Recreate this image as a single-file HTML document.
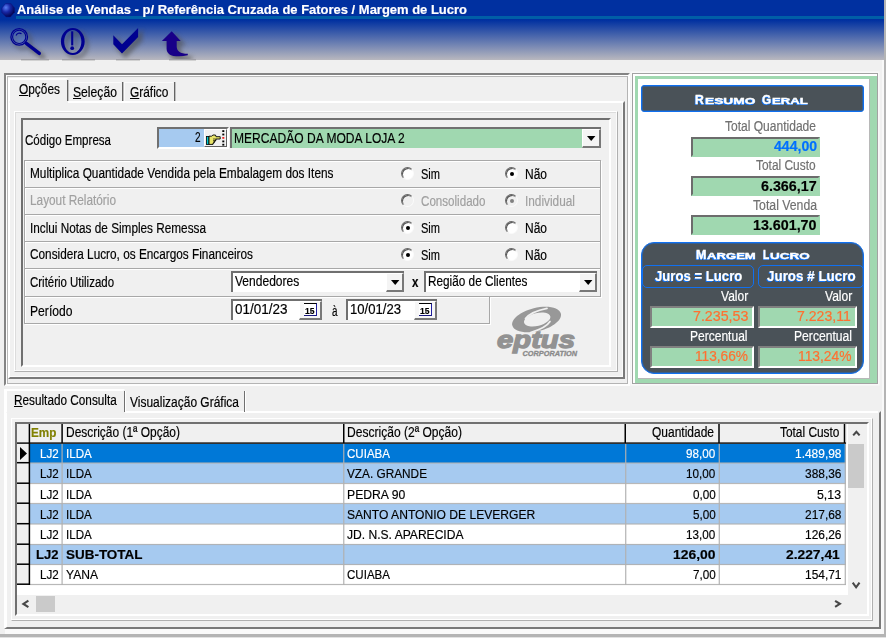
<!DOCTYPE html>
<html lang="pt-BR"><head><meta charset="utf-8"><title>Análise de Vendas</title>
<style>
html,body{margin:0;padding:0;}
body{width:886px;height:638px;overflow:hidden;background:#f0f0f0;position:relative;font-family:"Liberation Sans",sans-serif;}
body div,body svg{position:absolute;box-sizing:border-box;}
.t{position:absolute;white-space:pre;line-height:0;height:0;transform-origin:0 0;-webkit-text-stroke:0.18px currentColor;}
.t u{text-decoration:underline;text-underline-offset:1px;}
.low{border:2px solid;border-color:#707070 #fff #fff #707070;}
.row{border:1px solid #a8a8a8;box-shadow:inset 1px 1px 0 #fff, 1px 1px 0 #fff;}
.btn{background:#f0f0f0;border:1px solid;border-color:#fff #606060 #606060 #fff;box-shadow:inset -1px -1px 0 #a0a0a0;}
.rad{border-radius:50%;width:13px;height:13px;background:#fff;border:1px solid;border-color:#686868 #fafafa #fafafa #686868;box-shadow:inset 1px 1px 0 #585858;transform:rotate(0deg);}
.rad.on::after{content:"";position:absolute;left:3.500px;top:3.500px;width:4px;height:4px;border-radius:50%;background:#000;}
.rad.dis{background:#f0f0f0;}
.rad.dis.on::after{background:#808080;}
.gf{background:#a0d8b0;border:2px solid;border-color:#6c6c6c #a0d8b0 #a0d8b0 #6c6c6c;}
.gf2{background:#a0d8b0;border:2px solid;border-color:#808080 #fff #fff #808080;}

</style></head>
<body>
<div style="left:0px;top:0px;width:886px;height:59.5px;background:linear-gradient(to bottom,#0030a0 0,#0030a0 20px,#b6b6be 59.500px);"></div>
<div style="left:16px;top:16px;width:870px;height:3px;background:#005ea6;"></div>
<div style="left:884px;top:0px;width:2px;height:638px;background:#b4b4b4;"></div>
<svg style="left:0;top:2px" width="17" height="17" viewBox="0 2 17 17"><defs><radialGradient id="sg" cx="0.32" cy="0.3" r="0.75"><stop offset="0" stop-color="#5880f4"/><stop offset="0.45" stop-color="#1828a8"/><stop offset="1" stop-color="#000048"/></radialGradient></defs><path d="M5.500 3.600h5.500l3.700 4.400v4.200l-4.200 4.700h-4.500l-4.200-4.400v-4.500z" fill="url(#sg)" stroke="#0a1888" stroke-width="0.600" stroke-linejoin="round"/></svg>
<svg style="left:0;top:20px" width="220" height="42" viewBox="0 20 220 42">
<defs><filter id="sh" x="-30%" y="-30%" width="170%" height="170%"><feGaussianBlur stdDeviation="2.2"/></filter>
<clipPath id="tb"><rect x="0" y="20" width="220" height="39"/></clipPath></defs>
<g clip-path="url(#tb)"><g filter="url(#sh)" opacity="0.6" transform="translate(3.5,3.5)" fill="#505050" stroke="#505050">
<circle cx="19.2" cy="36.900" r="8" stroke-width="3" fill="none"/><path d="M26 43.500L39.500 53.600" stroke-width="5" stroke-linecap="round"/>
<ellipse cx="72.800" cy="41.400" rx="10.500" ry="12.200" stroke-width="3.500" fill="none"/><path d="M72.200 31.300V49" stroke-width="2.500"/>
<path d="M113.300 35.200L122 44.300L138.100 28.100V36.900L122 53.600L113.300 44.300z" stroke-width="2"/>
<path d="M171.700 31.300L180.700 40.900H176.700V46.500C176.700 51 180 53.800 187.800 53.800V55.200C183 56.400 178 56.400 173.400 55.900C169 55 166.600 52.500 166.600 48.500V40.900H161.900z" stroke-width="2"/>
</g></g>
<rect x="21" y="59" width="28" height="2" fill="#000" opacity="0.13"/>
<rect x="62" y="59" width="33" height="2" fill="#000" opacity="0.13"/>
<rect x="116" y="59" width="24" height="2" fill="#000" opacity="0.13"/>
<rect x="169" y="59" width="27" height="2" fill="#000" opacity="0.13"/>
<circle cx="19.2" cy="36.900" r="7.500" fill="#5878c8" opacity="0.35"/>
<g fill="none" stroke="#000090">
<circle cx="19.2" cy="36.900" r="8.300" stroke-width="1.300"/>
<circle cx="19.2" cy="36.900" r="6.600" stroke-width="1.100"/>
<path d="M16 35.500a3.800 3.800 0 0 1 5.500-1.800" stroke-width="1.100"/>
<path d="M26.300 43.300L39.300 53.400" stroke-width="3.400" stroke-linecap="round"/>
<path d="M72.200 31.300V45.400" stroke-width="2.100"/>
</g>
<path d="M72.800 27.900c6.600 0 11.900 6 11.900 13.500s-5.300 13.600-11.900 13.600s-11.900-6.100-11.900-13.600s5.300-13.500 11.900-13.500zM72.800 29.900c-4.800 0-8.600 5.100-8.600 11.500s3.800 11.600 8.600 11.600s8.600-5.200 8.600-11.600s-3.800-11.500-8.600-11.500z" fill="#000090" fill-rule="evenodd"/>
<circle cx="72.200" cy="48.200" r="1.900" fill="#000090"/>
<path d="M113.300 35.200L122 44.300L138.100 28.100V36.900L122 53.600L113.300 44.300z" fill="#000090"/>
<path d="M171.700 31.300L180.700 40.900H176.700V46.500C176.700 51 180 53.800 187.800 53.800V55.200C183 56.400 178 56.400 173.400 55.900C169 55 166.600 52.500 166.600 48.500V40.900H161.900z" fill="#180088"/>
</svg>

<div style="left:4px;top:73px;width:626px;height:313px;border:2px solid;border-color:#848484 #fdfdfd #fdfdfd #848484;box-shadow:inset 1px 1px 0 #fff, inset -1px -1px 0 #b4b4b4, inset 2px 2px 0 #b8b8b8;"></div>
<div style="left:8px;top:78px;width:60px;height:25px;border:2px solid;border-color:#fff transparent transparent #fff;"></div>
<div style="left:8px;top:101px;width:617px;height:278px;border:2px solid;border-color:transparent #7a7a7a #7a7a7a #fff;box-shadow:inset -1px -1px 0 #fbfbfb;"></div>
<div style="left:68px;top:101px;width:555px;height:2px;background:#fff;"></div>
<div style="left:14px;top:111px;width:604px;height:261px;border:1px solid;border-color:#fff #b0b0b0 #b0b0b0 #fff;box-shadow:inset -1px -1px 0 #fbfbfb, inset 1px 1px 0 #dcdcdc;"></div>
<div style="left:21px;top:118px;width:590px;height:249px;border:2px solid;border-color:#707070 #fff #fff #707070;"></div>
<div style="left:67px;top:80px;width:1px;height:21px;background:#646464;box-shadow:1px 0 0 rgba(100,100,100,0.350);"></div>
<div style="left:122px;top:82px;width:1px;height:19px;background:#646464;box-shadow:1px 0 0 rgba(100,100,100,0.350);"></div>
<div style="left:174px;top:82px;width:1px;height:19px;background:#646464;box-shadow:1px 0 0 rgba(100,100,100,0.350);"></div>
<div style="left:69px;top:81.5px;width:52px;height:1px;background:#fafafa;"></div>
<div style="left:124px;top:81.5px;width:49px;height:1px;background:#fafafa;"></div>
<div style="left:123.5px;top:82px;width:1px;height:19px;background:#fafafa;"></div>
<div class="low" style="left:157px;top:127px;width:72px;height:22px;background:#a6caf0"></div>
<div style="left:204px;top:129px;width:23px;height:18px;background:#f0f0f0;border:1px solid;border-color:#fff #606060 #606060 #fff"></div>
<svg style="left:205px;top:130px" width="22" height="17" viewBox="205 130 22 17">
<rect x="206.500" y="136.500" width="2.500" height="8" fill="#00c8d0" stroke="#000" stroke-width="0.800"/>
<path d="M209 136.200h2.500l1.500-1.200h2.500l0.500 1.700h4.200v2.300h-4.200v1.400h-1v1.400h-1v1.400h-1v1.200h-4z" fill="#e8e468" stroke="#000" stroke-width="0.900" stroke-linejoin="round"/>
<path d="M213 139h3M213 140.500h2.500M213 142h2" stroke="#000" stroke-width="0.600"/>
<g fill="#000"><rect x="222.300" y="130.200" width="2" height="1.800"/><rect x="222.300" y="133.600" width="2" height="1.800"/><rect x="222.300" y="137" width="2" height="1.800" fill="#f02020"/><rect x="222.300" y="140.500" width="2" height="1.800"/><rect x="222.300" y="143.800" width="2" height="1.800"/></g>
</svg>
<div style="left:230px;top:127px;width:371px;height:21px;background:#a0d8b0;border:2px solid #707070;border-right:0;border-bottom:0"></div>
<div style="left:582px;top:129px;width:19px;height:19px;background:#f4f4f4;border:2px solid;border-color:#fff #787878 #787878 #fff;border-top-width:1px;border-left-width:1px"></div>
<svg style="left:587px;top:135.8px" width="9" height="6"><path d="M0 0h8.400l-4.200 5z" fill="#000"/></svg>
<div class="row" style="left:24px;top:160px;width:577px;height:28px"></div>
<div class="row" style="left:24px;top:187px;width:577px;height:28px"></div>
<div class="row" style="left:24px;top:214px;width:577px;height:28px"></div>
<div class="row" style="left:24px;top:241px;width:577px;height:28px"></div>
<div class="row" style="left:24px;top:268px;width:577px;height:29px"></div>
<div class="row" style="left:24px;top:296px;width:466px;height:28px"></div>
<div class="rad" style="left:401px;top:167.0px"></div>
<div class="rad on" style="left:505px;top:167.0px"></div>
<div class="rad dis" style="left:401px;top:194.0px"></div>
<div class="rad on dis" style="left:505px;top:194.0px"></div>
<div class="rad on" style="left:401px;top:221.0px"></div>
<div class="rad" style="left:505px;top:221.0px"></div>
<div class="rad on" style="left:401px;top:248.0px"></div>
<div class="rad" style="left:505px;top:248.0px"></div>
<div style="left:231px;top:271px;width:173px;height:21px;background:#fff;border:2px solid #707070;border-right:0;border-bottom:0"></div>
<div style="left:386px;top:273px;width:18px;height:19px;background:#f4f4f4;border:2px solid;border-color:#fff #787878 #787878 #fff;border-top-width:1px;border-left-width:1px"></div>
<svg style="left:391px;top:279.8px" width="9" height="6"><path d="M0 0h8.400l-4.200 5z" fill="#000"/></svg>
<div style="left:424px;top:271px;width:172.5px;height:21px;background:#fff;border:2px solid #707070;border-right:0;border-bottom:0"></div>
<div style="left:578.5px;top:273px;width:18px;height:19px;background:#f4f4f4;border:2px solid;border-color:#fff #787878 #787878 #fff;border-top-width:1px;border-left-width:1px"></div>
<svg style="left:583.5px;top:279.8px" width="9" height="6"><path d="M0 0h8.400l-4.200 5z" fill="#000"/></svg>
<div style="left:231px;top:299px;width:91px;height:21px;background:#fff;border:2px solid #707070;border-right:0;border-bottom:0"></div>
<div style="left:299px;top:301px;width:23px;height:19px;background:#f6f6f6;border:2px solid;border-color:#fff #787878 #787878 #fff;border-top-width:1px;border-left-width:1px"></div>
<div style="left:304px;top:303px;width:13px;height:13px;background:#fff;border-top:1.500px solid #000;border-right:1.500px solid #2020a0;border-bottom:1.500px solid #181880"></div>
<div style="left:346px;top:299px;width:91px;height:21px;background:#fff;border:2px solid #707070;border-right:0;border-bottom:0"></div>
<div style="left:414px;top:301px;width:23px;height:19px;background:#f6f6f6;border:2px solid;border-color:#fff #787878 #787878 #fff;border-top-width:1px;border-left-width:1px"></div>
<div style="left:419px;top:303px;width:13px;height:13px;background:#fff;border-top:1.500px solid #000;border-right:1.500px solid #2020a0;border-bottom:1.500px solid #181880"></div>
<svg style="left:494px;top:302px" width="90" height="58" viewBox="494 302 90 58">
<g fill="#989898">
<path transform="rotate(-14 536.600 319.500)" d="M536.600 307.800c13.800 0 25 5.200 25 11.700s-11.200 11.700-25 11.700s-25-5.200-25-11.700s11.200-11.700 25-11.700zM537.200 313.200c-7.500 0-13.500 2.900-13.500 6.400s6 6.400 13.500 6.400s13.500-2.900 13.500-6.400s-6-6.400-13.500-6.400z" fill-rule="evenodd"/>
</g>
<g fill="none" stroke="#f0f0f0" stroke-width="1.700" stroke-linecap="round">
<path d="M525.500 318.500Q531 311.500 547 308.300"/>
<path d="M550 321.500Q546 328 530.500 332.500"/>
</g>
<text x="497" y="348.200" font-family="Liberation Sans, sans-serif" font-weight="bold" font-style="italic" font-size="24" fill="#929292" stroke="#929292" stroke-width="1.300" textLength="78" lengthAdjust="spacingAndGlyphs">eptus</text>
<text x="522.500" y="355.500" font-family="Liberation Sans, sans-serif" font-weight="bold" font-style="italic" font-size="7" fill="#8a8a8a" stroke="#8a8a8a" stroke-width="0.300" textLength="54.500" lengthAdjust="spacingAndGlyphs">CORPORATION</text>
</svg>

<div style="left:632px;top:73px;width:246px;height:311px;background:#fff;border:1px solid #a2a2a2;box-shadow:0 0 0 1.500px #f9f9f9;"></div>
<div style="left:635px;top:75.5px;width:242px;height:307.5px;background:#a0d8b0;"></div>
<div style="left:638px;top:79px;width:232px;height:299.5px;background:#fff;border-right:1px solid #b8b8b8;border-bottom:1px solid #b8b8b8;"></div>
<div style="left:641px;top:85px;width:223px;height:27px;background:#4a5258;border:1px solid #1070f0;border-radius:3px;box-shadow:inset 0 0 0 1px rgba(16,112,240,0.400);"></div>
<div class="gf" style="left:691px;top:137px;width:129px;height:20px"></div>
<div class="gf" style="left:691px;top:176px;width:129px;height:20px"></div>
<div class="gf" style="left:691px;top:215px;width:129px;height:20px"></div>
<div style="left:641px;top:242px;width:223px;height:132px;background:#4a5258;border:1px solid #1070f0;border-radius:13px;box-shadow:inset 0 0 0 1px rgba(16,112,240,0.400);"></div>
<div style="left:642px;top:265px;width:112px;height:23px;border:1px solid #1070f0;border-radius:5px;"></div>
<div style="left:758px;top:265px;width:106px;height:23px;border:1px solid #1070f0;border-radius:5px;"></div>
<div class="gf2" style="left:650px;top:306px;width:104px;height:22px"></div>
<div class="gf2" style="left:758px;top:306px;width:99px;height:22px"></div>
<div class="gf2" style="left:650px;top:346px;width:104px;height:22px"></div>
<div class="gf2" style="left:758px;top:346px;width:99px;height:22px"></div>
<div style="left:5px;top:629px;width:879px;height:5px;background:#fafafa;"></div>
<div style="left:881px;top:411px;width:3px;height:223px;background:#fafafa;"></div>
<div style="left:0px;top:634px;width:886px;height:2.5px;background:#b4b4b4;"></div>
<div style="left:0px;top:636.5px;width:886px;height:1.5px;background:#e2e2e2;"></div>
<div style="left:882px;top:60px;width:2px;height:574px;background:#f8f8f8;"></div>
<div style="left:4px;top:389px;width:121px;height:25px;border:2px solid;border-color:#fff transparent transparent #fff;border-left-width:3px;"></div>
<div style="left:4px;top:411px;width:877px;height:218px;border:2px solid;border-color:transparent #7a7a7a #7a7a7a #fff;border-left-width:3px;"></div>
<div style="left:125px;top:411px;width:753px;height:2px;background:#fff;"></div>
<div style="left:11px;top:418px;width:862px;height:203px;border:1px solid;border-color:#fff #b0b0b0 #b0b0b0 #fff;box-shadow:inset -1px -1px 0 #fff;"></div>
<div style="left:124px;top:391px;width:1px;height:21px;background:#707070;box-shadow:1px 0 0 #fff;"></div>
<div style="left:244px;top:391px;width:1px;height:21px;background:#707070;box-shadow:1px 0 0 #fff;"></div>
<div style="left:15px;top:422px;width:854px;height:194px;background:#fff;border:2px solid;border-color:#707070 #fff #fff #707070;"></div>
<div style="left:17px;top:424px;width:830px;height:20px;background:#f0f0f0;"></div>
<div style="left:17px;top:442px;width:829px;height:1px;background:rgba(0,0,0,0.60)"></div>
<div style="left:17px;top:443px;width:829px;height:1px;background:rgba(0,0,0,0.80)"></div>
<div style="left:28px;top:424px;width:1px;height:19px;background:rgba(0,0,0,0.35)"></div>
<div style="left:29px;top:424px;width:1px;height:19px;background:rgba(0,0,0,1.00)"></div>
<div style="left:30px;top:424px;width:1px;height:19px;background:rgba(0,0,0,0.15)"></div>
<div style="left:61px;top:424px;width:1px;height:19px;background:rgba(0,0,0,0.65)"></div>
<div style="left:62px;top:424px;width:1px;height:19px;background:rgba(0,0,0,0.85)"></div>
<div style="left:343px;top:424px;width:1px;height:19px;background:rgba(0,0,0,1.00)"></div>
<div style="left:344px;top:424px;width:1px;height:19px;background:rgba(0,0,0,0.50)"></div>
<div style="left:624px;top:424px;width:1px;height:19px;background:rgba(0,0,0,0.50)"></div>
<div style="left:625px;top:424px;width:1px;height:19px;background:rgba(0,0,0,1.00)"></div>
<div style="left:718px;top:424px;width:1px;height:19px;background:rgba(0,0,0,0.75)"></div>
<div style="left:719px;top:424px;width:1px;height:19px;background:rgba(0,0,0,0.75)"></div>
<div style="left:843px;top:424px;width:1px;height:19px;background:rgba(0,0,0,0.25)"></div>
<div style="left:844px;top:424px;width:1px;height:19px;background:rgba(0,0,0,1.00)"></div>
<div style="left:845px;top:424px;width:1px;height:19px;background:rgba(0,0,0,0.25)"></div>
<div style="left:17px;top:444px;width:13px;height:19px;background:#f0f0f0;"></div>
<div style="left:30px;top:444px;width:816px;height:19px;background:#0078d7;"></div>
<div style="left:17px;top:463px;width:13px;height:20px;background:#f0f0f0;"></div>
<div style="left:30px;top:463px;width:816px;height:20px;background:#a6caf0;"></div>
<div style="left:17px;top:483px;width:13px;height:21px;background:#f0f0f0;"></div>
<div style="left:30px;top:483px;width:816px;height:21px;background:#fff;"></div>
<div style="left:17px;top:504px;width:13px;height:20px;background:#f0f0f0;"></div>
<div style="left:30px;top:504px;width:816px;height:20px;background:#a6caf0;"></div>
<div style="left:17px;top:524px;width:13px;height:20px;background:#f0f0f0;"></div>
<div style="left:30px;top:524px;width:816px;height:20px;background:#fff;"></div>
<div style="left:17px;top:544px;width:13px;height:21px;background:#f0f0f0;"></div>
<div style="left:30px;top:544px;width:816px;height:21px;background:#a6caf0;"></div>
<div style="left:17px;top:565px;width:13px;height:20px;background:#f0f0f0;"></div>
<div style="left:30px;top:565px;width:816px;height:20px;background:#fff;"></div>
<div style="left:30px;top:462px;width:816px;height:1px;background:rgba(176,176,176,0.54)"></div>
<div style="left:30px;top:463px;width:816px;height:1px;background:rgba(176,176,176,0.54)"></div>
<div style="left:17px;top:461px;width:13px;height:1px;background:rgba(0,0,0,0.05)"></div>
<div style="left:17px;top:462px;width:13px;height:1px;background:rgba(0,0,0,1.00)"></div>
<div style="left:17px;top:463px;width:13px;height:1px;background:rgba(0,0,0,0.45)"></div>
<div style="left:30px;top:482px;width:816px;height:1px;background:rgba(176,176,176,0.09)"></div>
<div style="left:30px;top:483px;width:816px;height:1px;background:rgba(176,176,176,0.90)"></div>
<div style="left:30px;top:484px;width:816px;height:1px;background:rgba(176,176,176,0.09)"></div>
<div style="left:17px;top:482px;width:13px;height:1px;background:rgba(0,0,0,0.55)"></div>
<div style="left:17px;top:483px;width:13px;height:1px;background:rgba(0,0,0,0.95)"></div>
<div style="left:30px;top:502px;width:816px;height:1px;background:rgba(176,176,176,0.09)"></div>
<div style="left:30px;top:503px;width:816px;height:1px;background:rgba(176,176,176,0.90)"></div>
<div style="left:30px;top:504px;width:816px;height:1px;background:rgba(176,176,176,0.09)"></div>
<div style="left:17px;top:502px;width:13px;height:1px;background:rgba(0,0,0,0.55)"></div>
<div style="left:17px;top:503px;width:13px;height:1px;background:rgba(0,0,0,0.95)"></div>
<div style="left:30px;top:523px;width:816px;height:1px;background:rgba(176,176,176,0.54)"></div>
<div style="left:30px;top:524px;width:816px;height:1px;background:rgba(176,176,176,0.54)"></div>
<div style="left:17px;top:522px;width:13px;height:1px;background:rgba(0,0,0,0.05)"></div>
<div style="left:17px;top:523px;width:13px;height:1px;background:rgba(0,0,0,1.00)"></div>
<div style="left:17px;top:524px;width:13px;height:1px;background:rgba(0,0,0,0.45)"></div>
<div style="left:30px;top:543px;width:816px;height:1px;background:rgba(176,176,176,0.09)"></div>
<div style="left:30px;top:544px;width:816px;height:1px;background:rgba(176,176,176,0.90)"></div>
<div style="left:30px;top:545px;width:816px;height:1px;background:rgba(176,176,176,0.09)"></div>
<div style="left:17px;top:543px;width:13px;height:1px;background:rgba(0,0,0,0.55)"></div>
<div style="left:17px;top:544px;width:13px;height:1px;background:rgba(0,0,0,0.95)"></div>
<div style="left:30px;top:563px;width:816px;height:1px;background:rgba(176,176,176,0.09)"></div>
<div style="left:30px;top:564px;width:816px;height:1px;background:rgba(176,176,176,0.90)"></div>
<div style="left:30px;top:565px;width:816px;height:1px;background:rgba(176,176,176,0.09)"></div>
<div style="left:17px;top:563px;width:13px;height:1px;background:rgba(0,0,0,0.55)"></div>
<div style="left:17px;top:564px;width:13px;height:1px;background:rgba(0,0,0,0.95)"></div>
<div style="left:30px;top:583px;width:816px;height:1px;background:rgba(176,176,176,0.09)"></div>
<div style="left:30px;top:584px;width:816px;height:1px;background:rgba(176,176,176,0.90)"></div>
<div style="left:30px;top:585px;width:816px;height:1px;background:rgba(176,176,176,0.09)"></div>
<div style="left:17px;top:583px;width:13px;height:1px;background:rgba(0,0,0,0.55)"></div>
<div style="left:17px;top:584px;width:13px;height:1px;background:rgba(0,0,0,0.95)"></div>
<div style="left:61px;top:444px;width:1px;height:141px;background:rgba(176,176,176,0.50)"></div>
<div style="left:62px;top:444px;width:1px;height:141px;background:rgba(176,176,176,0.68)"></div>
<div style="left:343px;top:444px;width:1px;height:141px;background:rgba(176,176,176,0.81)"></div>
<div style="left:344px;top:444px;width:1px;height:141px;background:rgba(176,176,176,0.36)"></div>
<div style="left:625px;top:444px;width:1px;height:141px;background:rgba(176,176,176,0.85)"></div>
<div style="left:626px;top:444px;width:1px;height:141px;background:rgba(176,176,176,0.32)"></div>
<div style="left:718px;top:444px;width:1px;height:141px;background:rgba(176,176,176,0.32)"></div>
<div style="left:719px;top:444px;width:1px;height:141px;background:rgba(176,176,176,0.85)"></div>
<div style="left:844px;top:444px;width:1px;height:141px;background:rgba(176,176,176,0.32)"></div>
<div style="left:845px;top:444px;width:1px;height:141px;background:rgba(176,176,176,0.85)"></div>
<div style="left:28px;top:443px;width:1px;height:142px;background:rgba(0,0,0,0.35)"></div>
<div style="left:29px;top:443px;width:1px;height:142px;background:rgba(0,0,0,1.00)"></div>
<div style="left:30px;top:443px;width:1px;height:142px;background:rgba(0,0,0,0.15)"></div>
<svg style="left:20px;top:447px" width="8" height="13"><path d="M0 0l7 6.5l-7 6.5z" fill="#000"/></svg>
<div style="left:847.5px;top:424px;width:19.5px;height:171px;background:#f0f0f0;"></div>
<div style="left:848px;top:443.5px;width:16px;height:44px;background:#cacaca;"></div>
<svg style="left:850px;top:428px" width="13" height="11" viewBox="850 428 13 11"><path d="M853.200 435.400L856.400 431.900L859.600 435.400" fill="none" stroke="#484848" stroke-width="2.100"/></svg>
<svg style="left:850px;top:579px" width="13" height="12" viewBox="850 579 13 12"><path d="M852.700 582.700L856.100 587.300L859.500 582.700" fill="none" stroke="#484848" stroke-width="2.100"/></svg>
<div style="left:17px;top:594.5px;width:850px;height:19px;background:#f0f0f0;"></div>
<div style="left:36px;top:595.5px;width:19px;height:16px;background:#cacaca;"></div>
<svg style="left:20px;top:597px" width="12" height="13" viewBox="20 597 12 13"><path d="M28.400 600.700L23.400 603.900L28.400 607.100" fill="none" stroke="#484848" stroke-width="2.100"/></svg>
<svg style="left:831px;top:597px" width="12" height="13" viewBox="831 597 12 13"><path d="M835.100 600.800L839.900 603.800L835.100 606.800" fill="none" stroke="#484848" stroke-width="2.100"/></svg>
<span class="t" style="left:17px;top:10px;font-size:13px;font-weight:bold;color:#fff;transform:scaleX(0.9982);">Análise de Vendas - p/ Referência Cruzada de Fatores / Margem de Lucro</span>
<span class="t" style="left:19px;top:89px;font-size:14px;color:#000;transform:scaleX(0.8497);"><u>O</u>pções</span>
<span class="t" style="left:73px;top:92px;font-size:14px;color:#000;transform:scaleX(0.8674);"><u>S</u>eleção</span>
<span class="t" style="left:130.1px;top:92px;font-size:14px;color:#000;transform:scaleX(0.8510);"><u>G</u>ráfico</span>
<span class="t" style="left:25px;top:140px;font-size:14px;color:#000;transform:scaleX(0.8247);">Código Empresa</span>
<span class="t" style="left:195.2px;top:137px;font-size:14px;color:#000;transform:scaleX(0.7182);">2</span>
<span class="t" style="left:233.75px;top:138px;font-size:14px;color:#000;transform:scaleX(0.8607);">MERCADÃO DA MODA LOJA 2</span>
<span class="t" style="left:29.5px;top:173px;font-size:14px;color:#000;transform:scaleX(0.8459);">Multiplica Quantidade Vendida pela Embalagem dos Itens</span>
<span class="t" style="left:29.5px;top:200px;font-size:14px;color:#a0a0a0;transform:scaleX(0.8435);">Layout Relatório</span>
<span class="t" style="left:29.5px;top:228px;font-size:14px;color:#000;transform:scaleX(0.8408);">Inclui Notas de Simples Remessa</span>
<span class="t" style="left:29.5px;top:254px;font-size:14px;color:#000;transform:scaleX(0.8429);">Considera Lucro, os Encargos Financeiros</span>
<span class="t" style="left:29.5px;top:282px;font-size:14px;color:#000;transform:scaleX(0.8179);">Critério Utilizado</span>
<span class="t" style="left:29.5px;top:311px;font-size:14px;color:#000;transform:scaleX(0.8665);">Período</span>
<span class="t" style="left:420.5px;top:174px;font-size:14px;color:#000;transform:scaleX(0.7876);">Sim</span>
<span class="t" style="left:524.5px;top:174px;font-size:14px;color:#000;transform:scaleX(0.8564);">Não</span>
<span class="t" style="left:420.5px;top:201px;font-size:14px;color:#a0a0a0;transform:scaleX(0.8286);">Consolidado</span>
<span class="t" style="left:524.5px;top:201px;font-size:14px;color:#a0a0a0;transform:scaleX(0.8452);">Individual</span>
<span class="t" style="left:420.5px;top:228px;font-size:14px;color:#000;transform:scaleX(0.7876);">Sim</span>
<span class="t" style="left:524.5px;top:228px;font-size:14px;color:#000;transform:scaleX(0.8564);">Não</span>
<span class="t" style="left:420.5px;top:255px;font-size:14px;color:#000;transform:scaleX(0.7876);">Sim</span>
<span class="t" style="left:524.5px;top:255px;font-size:14px;color:#000;transform:scaleX(0.8564);">Não</span>
<span class="t" style="left:234.5px;top:281px;font-size:14px;color:#000;transform:scaleX(0.8597);">Vendedores</span>
<span class="t" style="left:411.7px;top:282px;font-size:14px;font-weight:bold;color:#000;transform:scaleX(0.8208);">x</span>
<span class="t" style="left:427.5px;top:281px;font-size:14px;color:#000;transform:scaleX(0.8411);">Região de Clientes</span>
<span class="t" style="left:305px;top:311px;font-size:9.5px;font-weight:bold;color:#000;transform:scaleX(0.8981);">15</span>
<span class="t" style="left:234.5px;top:309px;font-size:14px;color:#000;transform:scaleX(0.9633);">01/01/23</span>
<span class="t" style="left:332px;top:311px;font-size:14px;color:#000;transform:scaleX(0.7054);">à</span>
<span class="t" style="left:420px;top:311px;font-size:9.5px;font-weight:bold;color:#000;transform:scaleX(0.8981);">15</span>
<span class="t" style="left:349.5px;top:309px;font-size:14px;color:#000;transform:scaleX(0.9358);">10/01/23</span>
<span class="t" style="left:695.2px;top:100px;font-size:12px;font-weight:bold;color:#fff;transform:scaleX(1.0148);text-shadow:-1px 1px 0 #1070f0, 0 1px 0 #1070f0;-webkit-text-stroke:0.400px #fff;">R</span>
<span class="t" style="left:704.6px;top:101px;font-size:9.3px;font-weight:bold;color:#fff;transform:scaleX(1.4783);text-shadow:-1px 1px 0 #1070f0, 0 1px 0 #1070f0;-webkit-text-stroke:0.400px #fff;">ESUMO</span>
<span class="t" style="left:762px;top:100px;font-size:12px;font-weight:bold;color:#fff;transform:scaleX(0.9846);text-shadow:-1px 1px 0 #1070f0, 0 1px 0 #1070f0;-webkit-text-stroke:0.400px #fff;">G</span>
<span class="t" style="left:772.1px;top:101px;font-size:9.3px;font-weight:bold;color:#fff;transform:scaleX(1.4183);text-shadow:-1px 1px 0 #1070f0, 0 1px 0 #1070f0;-webkit-text-stroke:0.400px #fff;">ERAL</span>
<span class="t" style="left:724.5px;top:126px;font-size:14px;color:#707070;transform:scaleX(0.8596);">Total Quantidade</span>
<span class="t" style="left:773.7px;top:146px;font-size:14px;font-weight:bold;color:#0070ff;transform:scaleX(1.0063);">444,00</span>
<span class="t" style="left:755.8px;top:165px;font-size:14px;color:#707070;transform:scaleX(0.8509);">Total Custo</span>
<span class="t" style="left:760.7px;top:186px;font-size:14px;font-weight:bold;color:#000;transform:scaleX(1.0202);">6.366,17</span>
<span class="t" style="left:752.6px;top:205px;font-size:14px;color:#707070;transform:scaleX(0.8747);">Total Venda</span>
<span class="t" style="left:753.1px;top:225px;font-size:14px;font-weight:bold;color:#000;transform:scaleX(1.0193);">13.601,70</span>
<span class="t" style="left:695.7px;top:255px;font-size:12px;font-weight:bold;color:#fff;transform:scaleX(1.0400);text-shadow:-1px 1px 0 #1070f0, 0 1px 0 #1070f0;-webkit-text-stroke:0.400px #fff;">M</span>
<span class="t" style="left:706.9px;top:256px;font-size:9.3px;font-weight:bold;color:#fff;transform:scaleX(1.4100);text-shadow:-1px 1px 0 #1070f0, 0 1px 0 #1070f0;-webkit-text-stroke:0.400px #fff;">ARGEM</span>
<span class="t" style="left:763.2px;top:255px;font-size:12px;font-weight:bold;color:#fff;transform:scaleX(0.8579);text-shadow:-1px 1px 0 #1070f0, 0 1px 0 #1070f0;-webkit-text-stroke:0.400px #fff;">L</span>
<span class="t" style="left:770.2px;top:256px;font-size:9.3px;font-weight:bold;color:#fff;transform:scaleX(1.4539);text-shadow:-1px 1px 0 #1070f0, 0 1px 0 #1070f0;-webkit-text-stroke:0.400px #fff;">UCRO</span>
<span class="t" style="left:655.3px;top:276px;font-size:14px;font-weight:bold;color:#fff;transform:scaleX(0.9390);text-shadow:-1px 1px 0 #1070f0;">Juros = Lucro</span>
<span class="t" style="left:767.4px;top:276px;font-size:14px;font-weight:bold;color:#fff;transform:scaleX(0.9569);text-shadow:-1px 1px 0 #1070f0;">Juros # Lucro</span>
<span class="t" style="left:721px;top:296px;font-size:14px;color:#fff;transform:scaleX(0.8592);">Valor</span>
<span class="t" style="left:825.2px;top:296px;font-size:14px;color:#fff;transform:scaleX(0.8624);">Valor</span>
<span class="t" style="left:693.2px;top:316px;font-size:14px;color:#ff7030;transform:scaleX(1.0147);">7.235,53</span>
<span class="t" style="left:796.5px;top:316px;font-size:14px;color:#ff7030;transform:scaleX(1.0062);">7.223,11</span>
<span class="t" style="left:690px;top:336px;font-size:14px;color:#fff;transform:scaleX(0.8590);">Percentual</span>
<span class="t" style="left:794px;top:336px;font-size:14px;color:#fff;transform:scaleX(0.8665);">Percentual</span>
<span class="t" style="left:695px;top:356px;font-size:14px;color:#ff7030;transform:scaleX(0.9772);">113,66%</span>
<span class="t" style="left:798px;top:356px;font-size:14px;color:#ff7030;transform:scaleX(0.9865);">113,24%</span>
<span class="t" style="left:13.75px;top:400px;font-size:14px;color:#000;transform:scaleX(0.8408);"><u>R</u>esultado Consulta</span>
<span class="t" style="left:130px;top:402px;font-size:14px;color:#000;transform:scaleX(0.8557);">Visualização Gráfica</span>
<span class="t" style="left:31.4px;top:433px;font-size:13px;font-weight:bold;color:#808000;transform:scaleX(0.9016);">Emp</span>
<span class="t" style="left:65.5px;top:432px;font-size:14px;color:#000;transform:scaleX(0.8535);">Descrição (1ª Opção)</span>
<span class="t" style="left:347px;top:432px;font-size:14px;color:#000;transform:scaleX(0.8610);">Descrição (2ª Opção)</span>
<span class="t" style="left:652px;top:432px;font-size:14px;color:#000;transform:scaleX(0.8563);">Quantidade</span>
<span class="t" style="left:780.25px;top:432px;font-size:14px;color:#000;transform:scaleX(0.8494);">Total Custo</span>
<span class="t" style="left:40px;top:454px;font-size:13.5px;color:#fff;transform:scaleX(0.8608);">LJ2</span>
<span class="t" style="left:65.5px;top:454px;font-size:13.5px;color:#fff;transform:scaleX(0.8579);">ILDA</span>
<span class="t" style="left:347px;top:454px;font-size:13.5px;color:#fff;transform:scaleX(0.8555);">CUIABA</span>
<span class="t" style="left:686px;top:454px;font-size:13.5px;color:#fff;transform:scaleX(0.8655);">98,00</span>
<span class="t" style="left:794.5px;top:454px;font-size:13.5px;color:#fff;transform:scaleX(0.8847);">1.489,98</span>
<span class="t" style="left:40px;top:474px;font-size:13.5px;color:#000;transform:scaleX(0.8608);">LJ2</span>
<span class="t" style="left:65.5px;top:474px;font-size:13.5px;color:#000;transform:scaleX(0.8579);">ILDA</span>
<span class="t" style="left:347px;top:474px;font-size:13.5px;color:#000;transform:scaleX(0.8742);">VZA. GRANDE</span>
<span class="t" style="left:686px;top:474px;font-size:13.5px;color:#000;transform:scaleX(0.8655);">10,00</span>
<span class="t" style="left:804.5px;top:474px;font-size:13.5px;color:#000;transform:scaleX(0.8838);">388,36</span>
<span class="t" style="left:40px;top:495px;font-size:13.5px;color:#000;transform:scaleX(0.8608);">LJ2</span>
<span class="t" style="left:65.5px;top:495px;font-size:13.5px;color:#000;transform:scaleX(0.8579);">ILDA</span>
<span class="t" style="left:347px;top:495px;font-size:13.5px;color:#000;transform:scaleX(0.9024);">PEDRA 90</span>
<span class="t" style="left:692.5px;top:495px;font-size:13.5px;color:#000;transform:scaleX(0.8656);">0,00</span>
<span class="t" style="left:817px;top:495px;font-size:13.5px;color:#000;transform:scaleX(0.9132);">5,13</span>
<span class="t" style="left:40px;top:515px;font-size:13.5px;color:#000;transform:scaleX(0.8608);">LJ2</span>
<span class="t" style="left:65.5px;top:515px;font-size:13.5px;color:#000;transform:scaleX(0.8579);">ILDA</span>
<span class="t" style="left:347px;top:515px;font-size:13.5px;color:#000;transform:scaleX(0.8951);">SANTO ANTONIO DE LEVERGER</span>
<span class="t" style="left:692.5px;top:515px;font-size:13.5px;color:#000;transform:scaleX(0.8656);">5,00</span>
<span class="t" style="left:804.5px;top:515px;font-size:13.5px;color:#000;transform:scaleX(0.8838);">217,68</span>
<span class="t" style="left:40px;top:535px;font-size:13.5px;color:#000;transform:scaleX(0.8608);">LJ2</span>
<span class="t" style="left:65.5px;top:535px;font-size:13.5px;color:#000;transform:scaleX(0.8579);">ILDA</span>
<span class="t" style="left:347px;top:535px;font-size:13.5px;color:#000;transform:scaleX(0.8942);">JD. N.S. APARECIDA</span>
<span class="t" style="left:686px;top:535px;font-size:13.5px;color:#000;transform:scaleX(0.8655);">13,00</span>
<span class="t" style="left:804.5px;top:535px;font-size:13.5px;color:#000;transform:scaleX(0.8838);">126,26</span>
<span class="t" style="left:36.25px;top:555px;font-size:13.5px;font-weight:bold;color:#000;transform:scaleX(0.9671);">LJ2</span>
<span class="t" style="left:65.5px;top:555px;font-size:13.5px;font-weight:bold;color:#000;transform:scaleX(0.9967);">SUB-TOTAL</span>
<span class="t" style="left:672.75px;top:555px;font-size:13.5px;font-weight:bold;color:#000;transform:scaleX(1.0291);">126,00</span>
<span class="t" style="left:786px;top:555px;font-size:13.5px;font-weight:bold;color:#000;transform:scaleX(1.0226);">2.227,41</span>
<span class="t" style="left:40px;top:575px;font-size:13.5px;color:#000;transform:scaleX(0.8608);">LJ2</span>
<span class="t" style="left:65.5px;top:575px;font-size:13.5px;color:#000;transform:scaleX(0.8947);">YANA</span>
<span class="t" style="left:347px;top:575px;font-size:13.5px;color:#000;transform:scaleX(0.8555);">CUIABA</span>
<span class="t" style="left:692.5px;top:575px;font-size:13.5px;color:#000;transform:scaleX(0.8656);">7,00</span>
<span class="t" style="left:804.5px;top:575px;font-size:13.5px;color:#000;transform:scaleX(0.8838);">154,71</span>
</body></html>
